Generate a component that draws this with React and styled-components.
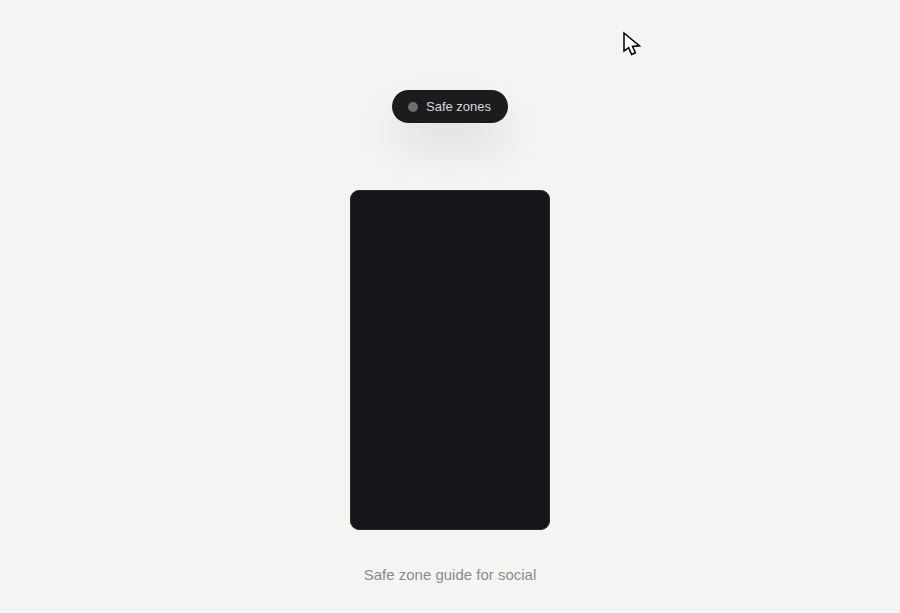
import React from "react";
import styled, { createGlobalStyle } from "styled-components";

const GlobalStyle = createGlobalStyle`
  html, body {
    margin: 0;
    padding: 0;
    height: 100%;
    background: #f4f4f2;
  }
`;

const Page = styled.main`
  position: relative;
  width: 900px;
  height: 613px;
  overflow: hidden;
  padding-top: 90px;
  box-sizing: border-box;
  display: flex;
  flex-direction: column;
  align-items: center;
  background: #f4f4f2;
  font-family: "Liberation Sans", Arial, sans-serif;
`;

const Toggle = styled.button`
  display: flex;
  align-items: center;
  gap: 8px;
  width: 116px;
  height: 33px;
  padding: 0 0 0 16px;
  box-sizing: border-box;
  border: 0;
  border-radius: 17px;
  background: #1c1c1e;
  color: #d8d8d8;
  font-family: inherit;
  font-size: 13px;
  box-shadow: 0 24px 44px rgba(0, 0, 0, 0.1);
`;

const Dot = styled.span`
  width: 10px;
  height: 10px;
  border-radius: 50%;
  background: #6e6e70;
`;

const Screen = styled.div`
  width: 200px;
  height: 340px;
  margin-top: 67px;
  box-sizing: border-box;
  border: 1px solid #2a2a2d;
  border-radius: 9px;
  background: #16161a;
`;

const Caption = styled.p`
  margin: 36px 0 0;
  font-size: 15px;
  line-height: 18px;
  color: #8b8b8b;
`;

const Cursor = styled.svg`
  position: absolute;
  left: 622px;
  top: 30.5px;
`;

export default function App() {
  return (
    <>
      <GlobalStyle />
      <Page>
        <Toggle>
          <Dot />
          Safe zones
        </Toggle>
        <Screen />
        <Caption>Safe zone guide for social</Caption>
        <Cursor width="20" height="25" viewBox="0 0 20 25">
          <path
            d="M2 2 L2 20 L6.6 16.6 L9.6 23.4 L13.4 21.8 L10.5 15.4 L17.5 14.8 Z"
            fill="#fff"
            stroke="#000"
            strokeWidth="1.5"
            strokeLinejoin="miter"
          />
        </Cursor>
      </Page>
    </>
  );
}
